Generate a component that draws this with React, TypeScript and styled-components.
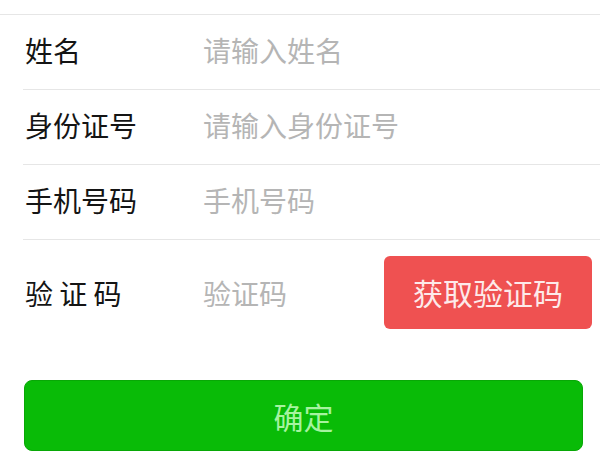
import React from "react";
import styled, { createGlobalStyle } from "styled-components";

const Global = createGlobalStyle`
  html, body { margin: 0; padding: 0; background: #ffffff; }
  body { font-family: "Noto Sans CJK SC", "Noto Sans", sans-serif; }
  * { box-sizing: border-box; }
`;

const Page = styled.div`
  width: 600px;
  height: 472px;
  padding-top: 14px;
  background: #ffffff;
  overflow: hidden;
`;

const Form = styled.div`
  border-top: 1px solid #e6e6e6;
`;

const Row = styled.div<{ $last?: boolean }>`
  display: grid;
  grid-template-columns: 178px 1fr auto;
  align-items: center;
  margin-left: 23px;
  padding-left: 2px;
  height: ${(p) => (p.$last ? "106px" : "75px")};
  padding-top: ${(p) => (p.$last ? "16px" : "0")};
  padding-bottom: ${(p) => (p.$last ? "17px" : "4px")};
  border-bottom: ${(p) => (p.$last ? "none" : "1px solid #e6e6e6")};
`;

const Label = styled.div`
  font-size: 28px;
  line-height: 1;
  color: #141414;
  white-space: pre;
`;

const Input = styled.input`
  border: none;
  outline: none;
  padding: 0;
  background: transparent;
  font-family: "Noto Sans CJK SC", "Noto Sans", sans-serif;
  font-size: 28px;
  line-height: 1;
  color: #141414;
  width: 100%;
  &::placeholder {
    color: #b5b5b5;
  }
`;

const CodeButton = styled.button`
  width: 208px;
  height: 73px;
  margin-right: 8px;
  border: none;
  border-radius: 6px;
  background: #ef5151;
  color: #fdeaea;
  font-family: "Noto Sans CJK SC", "Noto Sans", sans-serif;
  font-size: 30px;
  padding: 0;
  padding-bottom: 2px;
`;

const Actions = styled.div`
  padding: 34px 17px 0 24px;
`;

const Submit = styled.button`
  display: block;
  width: 100%;
  height: 71px;
  border: 1px solid #08a806;
  border-radius: 8px;
  background: #09bb07;
  color: #a6f3a0;
  font-family: "Noto Sans CJK SC", "Noto Sans", sans-serif;
  font-size: 30px;
  padding: 0;
`;

const fields = [
  { label: "姓名", placeholder: "请输入姓名" },
  { label: "身份证号", placeholder: "请输入身份证号" },
  { label: "手机号码", placeholder: "手机号码" },
];

export default function App() {
  return (
    <Page>
      <Global />
      <Form>
        {fields.map((f) => (
          <Row key={f.label}>
            <Label>{f.label}</Label>
            <Input placeholder={f.placeholder} />
          </Row>
        ))}
        <Row $last>
          <Label>{"验 证 码"}</Label>
          <Input placeholder="验证码" />
          <CodeButton>获取验证码</CodeButton>
        </Row>
      </Form>
      <Actions>
        <Submit>确定</Submit>
      </Actions>
    </Page>
  );
}
